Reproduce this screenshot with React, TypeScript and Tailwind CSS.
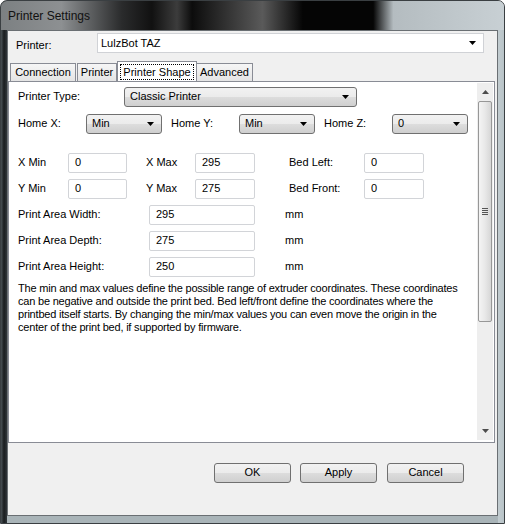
import React from "react";

const F = { fontFamily: '"Liberation Sans", Arial, sans-serif' };

function Arrow(props: { up?: boolean; gray?: boolean }) {
  const fill = props.gray ? "#4d4d4d" : "#000000";
  return (
    <svg width="7" height="4" viewBox="0 0 7 4" className="block">
      <path d={props.up ? "M0 4H7L3.5 0Z" : "M0 0H7L3.5 4Z"} fill={fill} />
    </svg>
  );
}

const btnBg = "bg-[linear-gradient(#f2f2f2_0%,#ebebeb_50%,#dddddd_50%,#cfcfcf_100%)]";

function BtnSelect(props: { text: string; w: string }) {
  return (
    <div className={props.w + " h-[20px] shrink-0 flex items-center justify-between pl-[5px] pr-[7px] rounded-[3px] border border-[#707070] " + btnBg}>
      <span className="leading-none">{props.text}</span>
      <Arrow />
    </div>
  );
}

function Input(props: { v: string; w: string }) {
  return (
    <div className={props.w + " h-[20px] shrink-0 flex items-center pl-[6px] bg-white border border-[#d2d4d8] rounded-[2px]"}>
      <span className="leading-none">{props.v}</span>
    </div>
  );
}

function Button(props: { text: string }) {
  return (
    <div className={"w-[77px] h-[20px] flex items-center justify-center rounded-[3px] border border-[#707070] " + btnBg}>
      <span className="leading-none">{props.text}</span>
    </div>
  );
}

function Row3(props: { a: string; av: string; b: string; bv: string; c: string; cv: string }) {
  return (
    <div className="flex items-center mt-[6px]">
      <span className="w-[50px]">{props.a}</span>
      <Input v={props.av} w="w-[59px]" />
      <span className="w-[49px] ml-[19px]">{props.b}</span>
      <Input v={props.bv} w="w-[60px]" />
      <span className="w-[75px] ml-[34px]">{props.c}</span>
      <Input v={props.cv} w="w-[60px]" />
    </div>
  );
}

function AreaRow(props: { label: string; v: string }) {
  return (
    <div className="flex items-center mt-[6px]">
      <span className="w-[131px]">{props.label}</span>
      <Input v={props.v} w="w-[106px]" />
      <span className="ml-[30px]">mm</span>
    </div>
  );
}

function Scrollbar() {
  return (
    <div className="w-[16px] shrink-0 mr-[1px] mt-[1px] mb-[2px] flex flex-col bg-[#eeeeee]">
      <div className="h-[18px] flex items-center justify-center">
        <Arrow up gray />
      </div>
      <div className="h-[221px] mx-[1px] rounded-[2px] border border-[#979797] bg-[linear-gradient(to_right,#f4f4f4,#e8e8e8,#d6d6d6)] flex items-center justify-center">
        <div className="flex flex-col gap-[1px]">
          <div className="w-[6px] h-[1px] bg-[#555555]" />
          <div className="w-[6px] h-[1px] bg-[#555555]" />
          <div className="w-[6px] h-[1px] bg-[#555555]" />
          <div className="w-[6px] h-[1px] bg-[#555555]" />
        </div>
      </div>
      <div className="flex-1" />
      <div className="h-[18px] flex items-center justify-center">
        <Arrow gray />
      </div>
    </div>
  );
}

const tabBg = "bg-[linear-gradient(#f6f6f6,#e4e4e4)]";

export default function App() {
  return (
    <div
      className="w-[505px] h-[524px] flex flex-col px-[6px] pb-[7px] rounded-t-[7px] border border-[#3a3f42] text-[11px] text-black bg-[linear-gradient(to_right,#4a5256_0px,#1a1d1f_3px,#30363a_6px,#a9b4b8_6px,#a9b4b8_497px,#c2ccd0_497px,#b8c3c7_503px)]"
      style={F}
    >
      <div className="h-[29px] mx-[-6px] shrink-0 flex items-center pl-[7px] rounded-t-[6px] bg-[linear-gradient(to_right,#7c8082,#8d9092_12%,#2a2b2c_24%,#111111_30%,#3c3c3c_35%,#0c0c0c_38%,#5a5a5a_52%,#050505_60%,#050505_74%,#b4bcc0_78%,#c8d0d4)]">
        <span className="text-[12px] text-[#111111]">Printer Settings</span>
      </div>
      <div className="w-[491px] flex-1 flex flex-col bg-[#f0f0f0] border border-[#6a6f73]">
        <div className="flex items-center mt-[2px] pl-[8px]">
          <span className="w-[81px] pt-[4px]">Printer:</span>
          <div className="w-[387px] h-[20px] flex items-center justify-between bg-white border border-[#d0d2d6] pl-[3px] pr-[7px]">
            <span className="leading-none">LulzBot TAZ</span>
            <Arrow />
          </div>
        </div>
        <div className="flex items-end h-[20px] mt-[7px] pl-[2px]">
          <div className={"w-[66px] h-[18px] flex items-center justify-center border border-b-0 border-[#898c95] " + tabBg}>
            Connection
          </div>
          <div className={"w-[40px] h-[18px] ml-[1px] flex items-center justify-center border border-b-0 border-[#898c95] " + tabBg}>
            Printer
          </div>
          <div className="w-[80px] h-[21px] mb-[-1px] flex items-start justify-center pt-[2px] border border-b-0 border-[#898c95] bg-white">
            <span className="border border-dotted border-black px-[2px] leading-[14px]">Printer Shape</span>
          </div>
          <div className={"w-[56px] h-[18px] flex items-center justify-center border border-b-0 border-l-0 border-[#898c95] " + tabBg}>
            Advanced
          </div>
        </div>
        <div className="w-[487px] h-[362px] flex bg-white border border-[#898c95]">
          <div className="flex-1 flex flex-col pl-[9px] pt-[5px]">
            <div className="flex items-center">
              <span className="w-[106px]">Printer Type:</span>
              <BtnSelect text="Classic Printer" w="w-[233px]" />
            </div>
            <div className="flex items-center mt-[7px]">
              <span className="w-[68px]">Home X:</span>
              <BtnSelect text="Min" w="w-[76px]" />
              <span className="w-[68px] ml-[9px]">Home Y:</span>
              <BtnSelect text="Min" w="w-[76px]" />
              <span className="w-[68px] ml-[9px]">Home Z:</span>
              <BtnSelect text="0" w="w-[76px]" />
            </div>
            <div className="mt-[13px]">
              <Row3 a="X Min" av="0" b="X Max" bv="295" c="Bed Left:" cv="0" />
            </div>
            <Row3 a="Y Min" av="0" b="Y Max" bv="275" c="Bed Front:" cv="0" />
            <AreaRow label="Print Area Width:" v="295" />
            <AreaRow label="Print Area Depth:" v="275" />
            <AreaRow label="Print Area Height:" v="250" />
            <div className="mt-[5px] leading-[13px] tracking-[-0.2px] flex flex-col">
              <span className="whitespace-nowrap">The min and max values define the possible range of extruder coordinates. These coordinates</span>
              <span className="whitespace-nowrap">can be negative and outside the print bed. Bed left/front define the coordinates where the</span>
              <span className="whitespace-nowrap">printbed itself starts. By changing the min/max values you can even move the origin in the</span>
              <span className="whitespace-nowrap">center of the print bed, if supported by firmware.</span>
            </div>
          </div>
          <Scrollbar />
        </div>
        <div className="flex mt-[20px] pl-[206px] gap-[9px]">
          <Button text="OK" />
          <Button text="Apply" />
          <div className="ml-[1px]">
            <Button text="Cancel" />
          </div>
        </div>
      </div>
    </div>
  );
}
